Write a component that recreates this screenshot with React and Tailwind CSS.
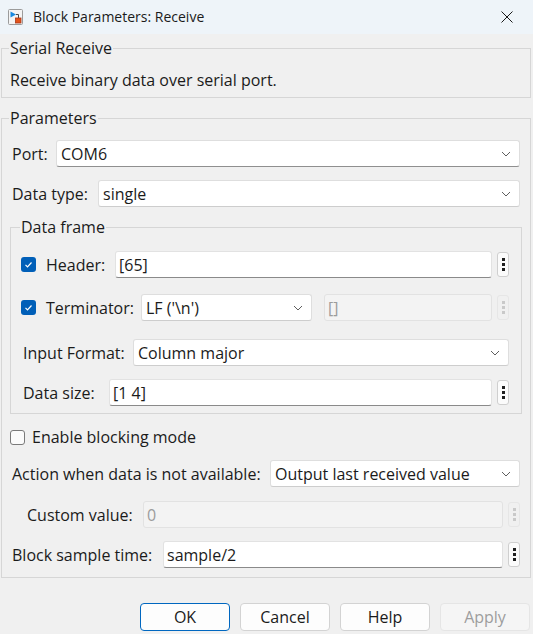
import React from 'react';

function Chevron() {
  return (
    <svg width="10" height="6" viewBox="0 0 10 6" className="shrink-0">
      <path d="M1 1l4 4 4-4" fill="none" stroke="#5f5f5f" strokeWidth="1" />
    </svg>
  );
}

function CheckBox({ checked }) {
  if (checked) {
    return (
      <span className="w-[15px] h-[15px] rounded-[3px] bg-[#005fb8] flex items-center justify-center shrink-0">
        <svg width="11" height="11" viewBox="0 0 11 11">
          <path d="M2.5 5.8l2 2 4-4.3" fill="none" stroke="#ffffff" strokeWidth="1.2" />
        </svg>
      </span>
    );
  }
  return <span className="w-[15px] h-[15px] rounded-[3px] border border-[#7a7a7a] bg-[#fbfbfb] shrink-0" />;
}

function DotsButton({ disabled }) {
  const dot = disabled ? 'bg-[#c9c9c9]' : 'bg-[#1f1f1f]';
  return (
    <span
      className={
        'w-[12px] h-[25px] ml-[5px] rounded-[3px] border flex flex-col items-center justify-center gap-[2px] shrink-0 ' +
        (disabled ? 'border-[#e6e6e6] bg-[#f0f0f0]' : 'border-[#cfcfcf] bg-[#fbfbfb]')
      }
    >
      <span className={'w-[3px] h-[3px] ' + dot} />
      <span className={'w-[3px] h-[3px] ' + dot} />
      <span className={'w-[3px] h-[3px] ' + dot} />
    </span>
  );
}

function Select({ value, className = '', strong }) {
  return (
    <div
      className={
        'h-[27px] bg-white border border-[#dedede] rounded-[3px] flex items-center pl-[4px] pr-[8px] ' +
        (strong ? 'border-b-[#8f8f8f] ' : 'border-b-[#cdcdcd] ') +
        className
      }
    >
      <span className="flex-1 truncate">{value}</span>
      <Chevron />
    </div>
  );
}

function Edit({ value, disabled, className = '' }) {
  return (
    <div
      className={
        'h-[27px] flex-1 border rounded-[3px] flex items-center pl-[3px] ' +
        (disabled
          ? 'bg-[#f3f3f3] border-[#e2e2e2] text-[#9c9c9c] '
          : 'bg-white border-[#e2e2e2] border-b-[#8a8a8a] ') +
        className
      }
    >
      {value}
    </div>
  );
}

function Button({ children, primary, disabled }) {
  return (
    <button
      className={
        'w-[90px] h-[28px] rounded-[4px] border flex items-center justify-center ' +
        (primary
          ? 'border-[#0067c0] bg-[#fdfdfd] text-[#1b1b1b]'
          : disabled
          ? 'border-[#e5e5e5] bg-[#f5f5f5] text-[#9d9d9d]'
          : 'border-[#d3d3d3] bg-[#fdfdfd] text-[#1b1b1b]')
      }
    >
      {children}
    </button>
  );
}

export default function App() {
  return (
    <div className="w-[533px] h-[634px] bg-[#f0f0f0] text-[#1b1b1b] font-['Open_Sans',sans-serif] text-[16px] leading-[20px] overflow-hidden flex flex-col">
      {/* Title bar */}
      <div className="h-[34px] bg-[#eef4f9] flex items-center pl-[8px] pr-[20px] shrink-0">
        <svg width="15" height="16" viewBox="0 0 15 16" className="shrink-0">
          <rect x="0.5" y="0.5" width="14" height="15" rx="1" fill="#f4f4f4" stroke="#9b9b9b" />
          <path d="M2.5 2.5 L8 5.5 L2.5 8.5 Z" fill="#1a8ae0" />
          <path d="M8 5.5 H10.5 V9" fill="none" stroke="#4a4a4a" strokeWidth="1" />
          <rect x="7.5" y="9" width="5.5" height="5" fill="#e4541b" stroke="#a8381a" strokeWidth="0.8" />
        </svg>
        <span className="ml-[10px] text-[14px]">Block Parameters: Receive</span>
        <svg width="12" height="12" viewBox="0 0 12 12" className="ml-auto">
          <path d="M0.5 0.5l11 11M11.5 0.5l-11 11" stroke="#1a1a1a" strokeWidth="1" />
        </svg>
      </div>

      <div className="pl-[1px] pr-[2px]">
        {/* Serial Receive */}
        <fieldset className="mt-[4px] border border-[#d6d6d6] pl-[8px] pb-[7px]">
          <legend className="ml-[-1px] px-[1px]">Serial Receive</legend>
          <p className="mt-[12px]">Receive binary data over serial port.</p>
        </fieldset>

        {/* Parameters */}
        <fieldset className="mt-[10px] border border-[#d6d6d6] pl-[8px] pr-[8px] pb-[9px]">
          <legend className="ml-[-1px] px-[1px]">Parameters</legend>

          <div className="mt-[12px] flex items-center mr-[2px]">
            <span className="w-[46px] pl-[2px] shrink-0">Port:</span>
            <Select value="COM6" className="flex-1" strong />
          </div>

          <div className="mt-[13px] flex items-center mr-[2px]">
            <span className="w-[88px] pl-[2px] shrink-0">Data type:</span>
            <Select value="single" className="flex-1" />
          </div>

          {/* Data frame */}
          <fieldset className="mt-[10px] border border-[#d6d6d6] pl-[10px] pr-[12px] pb-[7px]">
            <legend className="ml-[-1px] px-[1px]">Data frame</legend>

            <div className="mt-[14px] flex items-center">
              <CheckBox checked />
              <span className="ml-[10px] w-[69px] shrink-0">Header:</span>
              <Edit value="[65]" />
              <DotsButton />
            </div>

            <div className="mt-[16px] flex items-center">
              <CheckBox checked />
              <span className="ml-[10px] w-[95px] shrink-0">Terminator:</span>
              <Select value="LF ('\n')" className="w-[171px] shrink-0" />
              <Edit value="[]" disabled className="ml-[12px]" />
              <DotsButton disabled />
            </div>

            <div className="mt-[18px] flex items-center">
              <span className="w-[112px] pl-[2px] shrink-0">Input Format:</span>
              <Select value="Column major" className="flex-1" />
            </div>

            <div className="mt-[13px] flex items-center">
              <span className="w-[88px] pl-[2px] shrink-0">Data size:</span>
              <Edit value="[1 4]" />
              <DotsButton />
            </div>
          </fieldset>

          <div className="mt-[13px] h-[20px] flex items-center">
            <CheckBox />
            <span className="ml-[7px]">Enable blocking mode</span>
          </div>

          <div className="mt-[13px] flex items-center mr-[2px]">
            <span className="w-[260px] pl-[2px] shrink-0">Action when data is not available:</span>
            <Select value="Output last received value" className="flex-1" />
          </div>

          <div className="mt-[14px] flex items-center mr-[2px]">
            <span className="w-[133px] pl-[17px] shrink-0">Custom value:</span>
            <Edit value="0" disabled />
            <DotsButton disabled />
          </div>

          <div className="mt-[13px] flex items-center mr-[2px]">
            <span className="w-[153px] pl-[2px] shrink-0">Block sample time:</span>
            <Edit value="sample/2" />
            <DotsButton />
          </div>
        </fieldset>
      </div>

      {/* Buttons */}
      <div className="mt-[25px] flex justify-end gap-[10px] pr-[3px]">
        <Button primary>OK</Button>
        <Button>Cancel</Button>
        <Button>Help</Button>
        <Button disabled>Apply</Button>
      </div>
    </div>
  );
}
